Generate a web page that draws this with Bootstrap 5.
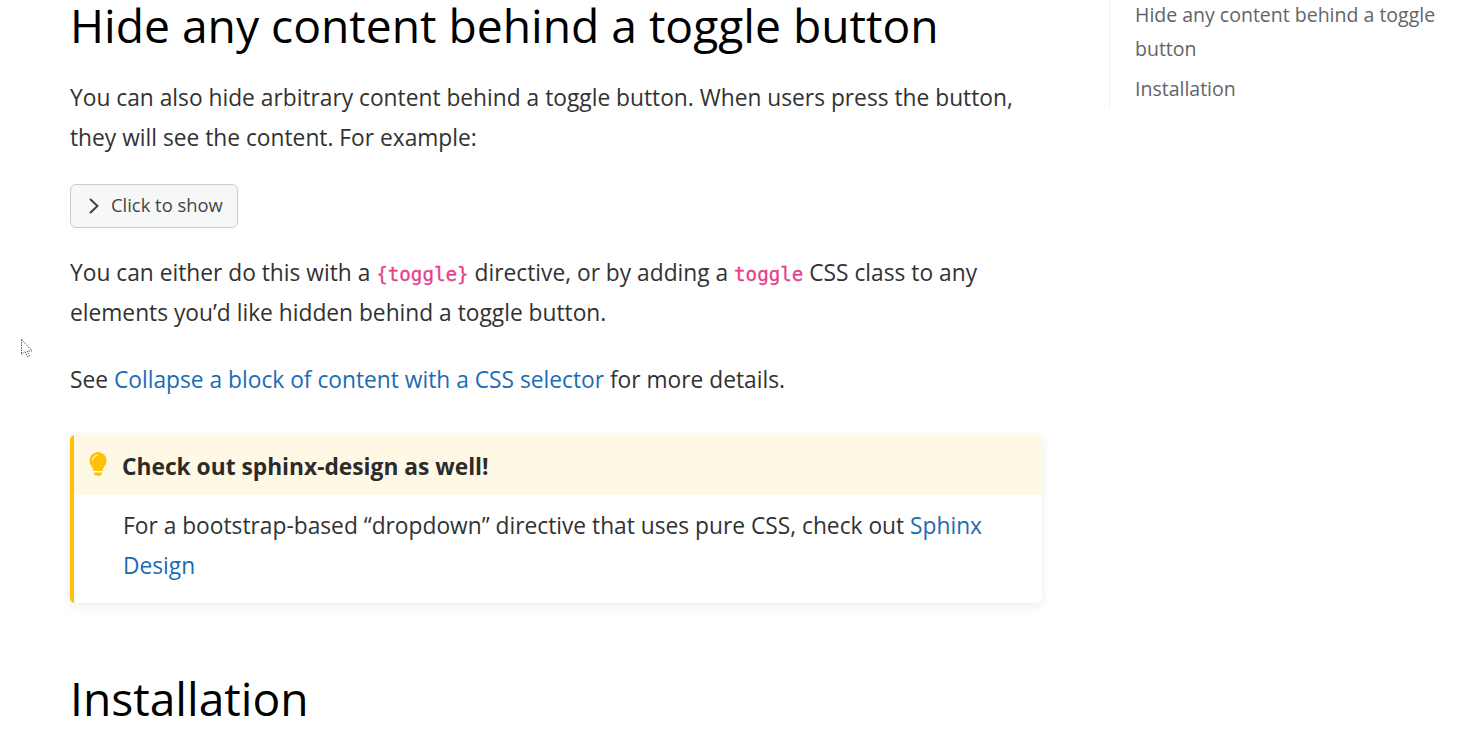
<!DOCTYPE html>
<html>
<head>
  <meta charset="UTF-8">
  <title>Hide any content behind a toggle button</title>
  <link href="https://cdn.jsdelivr.net/npm/bootstrap@5.3.2/dist/css/bootstrap.min.css" rel="stylesheet">
  <style>
    html, body { height: 747px; overflow: hidden; }
    body { font-family: "Open Sans", "Noto Sans", sans-serif; font-size: 22.75px; line-height: 39.6px; color: #323232; background: #fff; position: relative; }
    .page-wrap { padding-left: 70px; }
    .main-col { width: 972px; }
    .side-col { width: 362px; margin-left: 67px; }
    .page-title { font-family: inherit; font-size: 46.2px; line-height: 54px; font-weight: 400; color: #000; margin: 0; }
    .title-one { line-height: 54px; margin-top: -1px; margin-bottom: 25px; }
    .body-text { margin-bottom: 27px; }
    .body-text.gap-more { margin-bottom: 28px; }
    .body-text a, .tip-body a { color: #1a6cb5; text-decoration: none; }
    .toggle-btn { display: flex; align-items: center; width: 168px; height: 44px; background: #f6f8f8; border: 1px solid #cbcdcd; border-radius: 6px; color: #444; font-size: 18.4px; line-height: 1; padding: 0 0 2px 18px; margin-bottom: 25px; }
    .toggle-btn svg { margin-right: 12px; margin-top: 2px; }
    code.role-code { font-family: "DejaVu Sans Mono", "Liberation Mono", monospace; font-size: 19.2px; line-height: 1; color: #e83e8c; font-weight: 400; -webkit-text-stroke: .3px #e83e8c; }
    .tip-box { border-left: 4px solid #ffc107; border-radius: 5px; box-shadow: 0 3px 12px rgba(0,0,0,.08); margin: 35px 0 69px; }
    .tip-head { background: #fff8e5; height: 60px; display: flex; align-items: center; font-weight: 700; color: #2b2b2b; padding: 4px 0 0 14px; border-top-right-radius: 5px; }
    .tip-head svg { margin-right: 14px; margin-top: -5px; }
    .tip-body { padding: 11px 48px 18px 49px; }
    .toc-list { border-left: 1px solid #eceeef; padding-left: 25px; height: 109px; font-size: 19.5px; line-height: 34px; color: #646464; margin-top: -2px; }
    .toc-gap { margin-top: 6px; }
    .mouse-cursor { position: absolute; left: 21px; top: 339px; }
  </style>
</head>
<body>
  <div class="page-wrap d-flex">
    <div class="main-col">
      <h1 class="page-title title-one">Hide any content behind a toggle button</h1>
      <p class="body-text">You can also hide arbitrary content behind a toggle button. When users press the button, they will see the content. For example:</p>
      <div class="toggle-btn">
        <svg width="10" height="16" viewBox="0 0 10 16"><path d="M1 1l7.500 7L1 15" fill="none" stroke="#3c3c3c" stroke-width="1.900"/></svg>
        <span>Click to show</span>
      </div>
      <p class="body-text gap-more">You can either do this with a <code class="role-code">{toggle}</code> directive, or by adding a <code class="role-code">toggle</code> CSS class to any elements you’d like hidden behind a toggle button.</p>
      <p class="body-text">See <a href="#">Collapse a block of content with a CSS selector</a> for more details.</p>

      <div class="tip-box">
        <div class="tip-head">
          <svg width="20" height="24" viewBox="0 0 20 24">
            <path d="M10 0a8.600 8.600 0 0 0-8.600 8.600c0 4.400 3.600 6.400 4.200 10.400h8.800c.6-4 4.200-6 4.200-10.400A8.600 8.600 0 0 0 10 0z" fill="#ffc107"/>
            <path d="M4.600 8.600A5.400 5.400 0 0 1 10 3.200" fill="none" stroke="#ffe9a8" stroke-width="1.400"/>
            <path d="M6 20.400h8v1.400l-1.600 2H7.600L6 21.800z" fill="#ffc107"/>
          </svg>
          <span>Check out sphinx-design as well!</span>
        </div>
        <div class="tip-body">For a bootstrap-based “dropdown” directive that uses pure CSS, check out <a href="#">Sphinx Design</a></div>
      </div>

      <h1 class="page-title">Installation</h1>
    </div>
    <div class="side-col">
      <div class="toc-list">
        <div>Hide any content behind a toggle button</div>
        <div class="toc-gap">Installation</div>
      </div>
    </div>
  </div>
  <svg class="mouse-cursor" width="14" height="20" viewBox="0 0 14 20"><path d="M.5.5v15l3.500-3 2.500 5.500 2-1-2.500-5h5z" fill="#fff" stroke="#555" stroke-width="1" stroke-dasharray="1.500 1"/></svg>
</body>
</html>
